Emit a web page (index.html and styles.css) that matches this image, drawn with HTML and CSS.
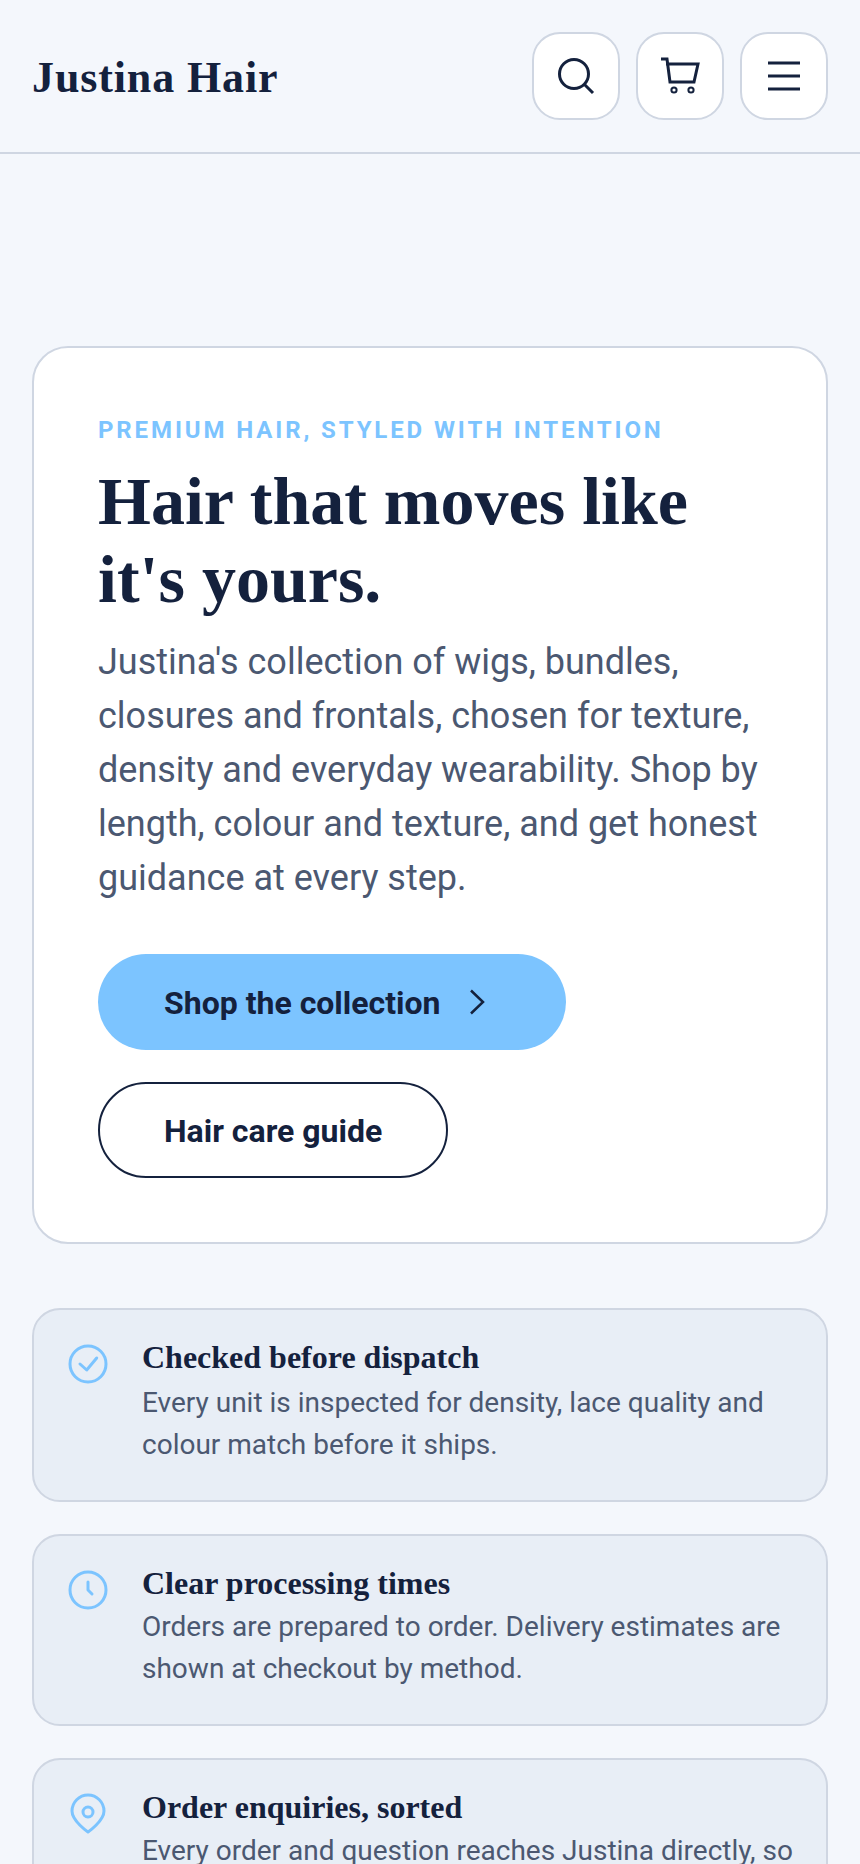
FILE: index.html
```html
<!DOCTYPE html>
<html lang="en">

<head>
    <meta charset="UTF-8">
    <meta name="viewport" content="width=device-width, initial-scale=1.0">
    <title>Justina Hair</title>
    <link rel="stylesheet" href="styles.css">
</head>

<body>
    <header class="nav">
        <a class="brand" href="#">Justina Hair</a>
        <div class="nav-actions">
            <button class="icon-btn" title="Search">
                <svg viewBox="0 0 40 40" width="40" height="40">
                    <circle cx="18" cy="18" r="14.500" />
                    <path d="M28.500 28.500L37 37" />
                </svg>
            </button>
            <button class="icon-btn" title="Cart">
                <svg viewBox="0 0 40 40" width="40" height="40">
                    <path d="M1 3h6l3 23h24l4-18H6" />
                    <circle class="wheel" cx="14" cy="34" r="2.600" />
                    <circle class="wheel" cx="31" cy="34" r="2.600" />
                </svg>
            </button>
            <button class="icon-btn" title="Menu">
                <svg viewBox="0 0 40 40" width="40" height="40">
                    <path d="M4 7h32M4 20h32M4 33h32" />
                </svg>
            </button>
        </div>
    </header>

    <main class="content">
        <section class="hero">
            <p class="eyebrow">Premium hair, styled with intention</p>
            <h1>Hair that moves like it's yours.</h1>
            <p class="lead">Justina's collection of wigs, bundles, closures and frontals, chosen for texture, density and everyday wearability. Shop by length, colour and texture, and get honest guidance at every step.</p>
            <div class="hero-actions">
                <a class="btn btn-primary" href="#">
                    Shop the collection
                    <svg viewBox="0 0 44 44" width="44" height="44">
                        <path d="M15 10.500l12 11.500-12 11.500" />
                    </svg>
                </a>
                <a class="btn btn-outline" href="#">Hair care guide</a>
            </div>
        </section>

        <section class="features">
            <article class="feature feature-first">
                <svg class="feature-icon" viewBox="0 0 44 44" width="44" height="44">
                    <circle cx="22" cy="22" r="18" />
                    <path d="M14 22l6.700 6L30.700 16" />
                </svg>
                <div>
                    <h2>Checked before dispatch</h2>
                    <p>Every unit is inspected for density, lace quality and colour match before it ships.</p>
                </div>
            </article>
            <article class="feature">
                <svg class="feature-icon" viewBox="0 0 44 44" width="44" height="44">
                    <circle cx="22" cy="22" r="18" />
                    <path d="M22 14v8l4 4" />
                </svg>
                <div>
                    <h2>Clear processing times</h2>
                    <p>Orders are prepared to order. Delivery estimates are shown at checkout by method.</p>
                </div>
            </article>
            <article class="feature">
                <svg class="feature-icon" viewBox="0 0 44 44" width="44" height="44">
                    <path d="M22 40C22 40 6 29 6 19a16 16 0 0 1 32 0C38 29 22 40 22 40z" />
                    <circle cx="22" cy="20" r="5" />
                </svg>
                <div>
                    <h2>Order enquiries, sorted</h2>
                    <p>Every order and question reaches Justina directly, so you always know who is helping you.</p>
                </div>
            </article>
        </section>
    </main>
</body>

</html>
```

FILE: styles.css
```css
* {
    margin: 0;
    padding: 0;
    box-sizing: border-box;
}

:root {
    --ink: #14213d;
    --muted: #4b5871;
    --sky: #7cc4ff;
    --line: #cfd6e2;
    --page: #f4f7fc;
    --panel: #e8eef6;
}

html,
body {
    height: 1864px;
    overflow: hidden;
}

body {
    background: var(--page);
    color: var(--ink);
    font-family: Roboto, sans-serif;
}

.nav {
    display: flex;
    justify-content: space-between;
    align-items: center;
    height: 154px;
    padding: 0 32px;
    border-bottom: 2px solid var(--line);
}

.brand {
    padding-top: 2px;
    font-family: "Liberation Serif", serif;
    font-size: 44px;
    font-weight: 700;
    letter-spacing: 0.88px;
    color: var(--ink);
    text-decoration: none;
}

.nav-actions {
    display: flex;
    gap: 16px;
}

.icon-btn {
    display: flex;
    align-items: center;
    justify-content: center;
    width: 88px;
    height: 88px;
    background: white;
    border: 2px solid var(--line);
    border-radius: 28px;
}

.icon-btn svg {
    fill: none;
    stroke: var(--ink);
    stroke-width: 3;
}

.icon-btn .wheel {
    stroke-width: 2;
}

.content {
    padding: 192px 32px 0;
}

.hero {
    padding: 64px;
    background: white;
    border: 2px solid var(--line);
    border-radius: 36px;
}

.eyebrow {
    font-size: 24px;
    font-weight: 700;
    line-height: 36px;
    letter-spacing: 2.880px;
    text-transform: uppercase;
    color: var(--sky);
}

.hero h1 {
    margin-top: 14px;
    font-family: "Liberation Serif", serif;
    font-size: 68px;
    line-height: 1.15;
}

.lead {
    margin-top: 17px;
    font-size: 36px;
    line-height: 54px;
    color: var(--muted);
}

.hero-actions {
    display: flex;
    flex-direction: column;
    align-items: flex-start;
    gap: 32px;
    margin-top: 49px;
}

.btn {
    display: inline-flex;
    align-items: center;
    gap: 15px;
    height: 96px;
    padding: 2px 64px 0;
    border: 2px solid transparent;
    border-radius: 48px;
    font-size: 32px;
    font-weight: 700;
    color: var(--ink);
    text-decoration: none;
}

.btn svg {
    margin-top: -2px;
    fill: none;
    stroke: var(--ink);
    stroke-width: 2.500;
}

.btn-primary {
    background: var(--sky);
}

.btn-outline {
    border-color: var(--ink);
}

.features {
    display: flex;
    flex-direction: column;
    gap: 32px;
    margin-top: 64px;
}

.feature {
    display: flex;
    gap: 32px;
    padding: 32px 32px 34px;
    background: var(--panel);
    border: 2px solid var(--line);
    border-radius: 28px;
}

.feature-icon {
    flex: none;
    fill: none;
    stroke: var(--sky);
    stroke-width: 3;
    stroke-linecap: round;
    stroke-linejoin: round;
}

.feature h2 {
    margin-bottom: 8px;
    font-family: "Liberation Serif", serif;
    font-size: 32px;
    line-height: 30px;
}

.feature-first h2 {
    margin-bottom: 10px;
}

.feature p {
    font-size: 28px;
    line-height: 42px;
    color: var(--muted);
}
```
